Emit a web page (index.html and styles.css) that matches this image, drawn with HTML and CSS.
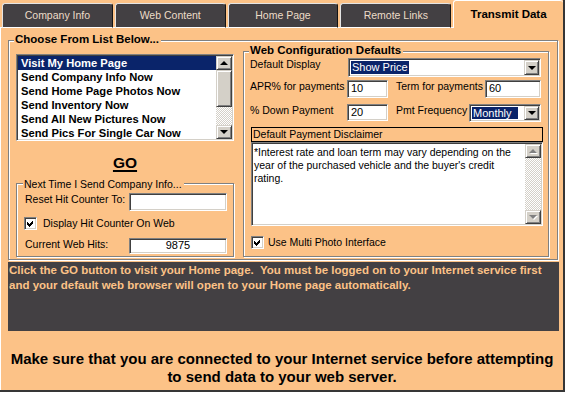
FILE: index.html
```html
<!DOCTYPE html>
<html lang="en">
<head>
    <meta charset="UTF-8">
    <meta name="viewport" content="width=device-width, initial-scale=1.0">
    <title>Transmit Data</title>
    <link rel="stylesheet" href="styles.css">
</head>
<body>
<div class="window">
    <div class="tabs">
        <div class="tab">Company Info</div>
        <div class="tab">Web Content</div>
        <div class="tab">Home Page</div>
        <div class="tab">Remote Links</div>
        <div class="tab active">Transmit Data</div>
    </div>

    <div class="panel">
        <div class="group outer">
            <div class="caption bold">Choose From List Below...</div>
            <div class="columns">
                <div class="left-col">
                    <div class="listbox">
                        <ul class="items">
                            <li class="selected">Visit My Home Page</li>
                            <li>Send Company Info Now</li>
                            <li>Send Home Page Photos Now</li>
                            <li>Send Inventory Now</li>
                            <li>Send All New Pictures Now</li>
                            <li>Send Pics For Single Car Now</li>
                        </ul>
                        <div class="vscroll">
                            <div class="sbtn up"></div>
                            <div class="thumb"></div>
                            <div class="track"></div>
                            <div class="sbtn down"></div>
                        </div>
                    </div>

                    <div class="go">GO</div>

                    <div class="group next">
                        <div class="caption">Next Time I Send Company Info...</div>
                        <div class="row reset-row">
                            <span class="lbl hit-lbl">Reset Hit Counter To:</span>
                            <div class="field hit-field"></div>
                        </div>
                        <div class="row check-row">
                            <span class="check">
                                <svg width="13" height="13" viewBox="0 0 13 13"><polygon points="3,5 5,7 9,3 9,6 5,10 3,8" fill="#000" shape-rendering="crispEdges"/></svg>
                            </span>
                            <span class="check-lbl">Display Hit Counter On Web</span>
                        </div>
                        <div class="row hits-row">
                            <span class="lbl hit-lbl">Current Web Hits:</span>
                            <div class="field hit-field hits">9875</div>
                        </div>
                    </div>
                </div>

                <div class="group config">
                    <div class="caption bold">Web Configuration Defaults</div>
                    <div class="row row-display">
                        <span class="lbl w98">Default Display</span>
                        <div class="combo w193">
                            <span class="pick">Show Price</span>
                            <span class="cbtn"></span>
                        </div>
                    </div>
                    <div class="row row-apr">
                        <span class="lbl w97">APR% for payments</span>
                        <div class="field small">10</div>
                        <span class="lbl second w89">Term for payments</span>
                        <div class="field term">60</div>
                    </div>
                    <div class="row row-down">
                        <span class="lbl w97">% Down Payment</span>
                        <div class="field small">20</div>
                        <span class="lbl second w73">Pmt Frequency</span>
                        <div class="combo w72">
                            <span class="pick monthly">Monthly</span>
                            <span class="cbtn"></span>
                        </div>
                    </div>
                    <div class="disclaimer-lbl">Default Payment Disclaimer</div>
                    <div class="memo">
                        <div class="memo-text">*Interest rate and loan term may vary depending on the<br>year of the purchased vehicle and the buyer's credit<br>rating.</div>
                        <div class="vscroll">
                            <div class="sbtn up off"></div>
                            <div class="track"></div>
                            <div class="sbtn down off"></div>
                        </div>
                    </div>
                    <div class="row multi-row">
                        <span class="check">
                            <svg width="13" height="13" viewBox="0 0 13 13"><polygon points="3,5 5,7 9,3 9,6 5,10 3,8" fill="#000" shape-rendering="crispEdges"/></svg>
                        </span>
                        <span class="check-lbl">Use Multi Photo Interface</span>
                    </div>
                </div>
            </div>
        </div>

        <div class="notice">Click the GO button to visit your Home page.&nbsp; You must be logged on to your Internet service first<br>and your default web browser will open to your Home page automatically.</div>

        <div class="warning">Make sure that you are connected to your Internet service before attempting<br>to send data to your web server.</div>
    </div>
</div>
</body>
</html>
```

FILE: styles.css
```css
body { margin: 0; background: #fff; font-family: "Liberation Sans", Arial, sans-serif; }

.window { width: 565px; height: 392px; box-sizing: border-box; background: #fcc287; border-right: 2px solid #363636; border-bottom: 2px solid #363636; display: flex; flex-direction: column; font-size: 10.5px; color: #000; }

/* tab strip */
.tabs { flex: none; display: flex; gap: 2px; height: 28px; padding-left: 2px; background: linear-gradient(#fff, #fff) left bottom / 100% 1px no-repeat; }
.tab { flex: 1; box-sizing: border-box; height: 25px; margin-top: 3px; background: #434043; color: #ecdcc8; border: 1px solid #e4e4e4; border-right-color: #141414; border-bottom-color: #fff; border-radius: 3px 3px 0 0; text-align: center; line-height: 23px; }
.tab.active { height: 28px; margin-top: 0; background: #fcc287; color: #000; border-color: #fff; border-right: none; border-bottom: none; font-weight: bold; font-size: 11.5px; line-height: 27px; }

.panel { flex: 1; border-left: 1px solid #fff; }

/* etched group boxes */
.group { box-sizing: border-box; border: 1px solid #808080; box-shadow: inset 1px 1px 0 #fff, 1px 1px 0 #fff; }
.caption { display: table; height: 14px; line-height: 14px; margin-top: -9px; padding: 0 2px 0 1px; background: #fcc287; white-space: nowrap; }
.bold { font-weight: bold; font-size: 11.5px; }

.outer { width: 550px; margin: 12px 0 0 7px; padding: 0 7px 2px; }
.outer > .caption { margin-left: -2px; }
.columns { display: flex; gap: 9px; align-items: flex-start; }

.left-col { width: 218px; margin-top: 8px; }

/* list box */
.listbox { display: flex; height: 87px; box-sizing: border-box; background: #fff; border: 1px solid; border-color: #808080 #fff #fff #808080; box-shadow: inset 1px 1px 0 #404040, inset -1px -1px 0 #d4d0c8; padding: 1px; }
.items { flex: 1; margin: 0; padding: 0; list-style: none; overflow: hidden; }
.items li { height: 14px; line-height: 14px; padding-left: 3px; font-weight: bold; font-size: 11.2px; white-space: nowrap; }
.items li.selected { background: #0a246a; color: #fff; }

.vscroll { width: 16px; display: flex; flex-direction: column; }
.sbtn, .thumb, .cbtn { box-sizing: border-box; background: #d4d0c8; border: 1px solid; border-color: #d4d0c8 #404040 #404040 #d4d0c8; box-shadow: inset 1px 1px 0 #fff, inset -1px -1px 0 #808080; }
.sbtn { height: 14px; display: flex; align-items: center; justify-content: center; }
.sbtn::after, .cbtn::after { content: ""; width: 0; height: 0; border-left: 4px solid transparent; border-right: 4px solid transparent; }
.sbtn.up::after { border-bottom: 4px solid #000; }
.sbtn.down::after, .cbtn::after { border-top: 4px solid #000; }
.sbtn.off::after { filter: drop-shadow(1px 1px 0 #fff); }
.sbtn.up.off::after { border-bottom-color: #808080; }
.sbtn.down.off::after { border-top-color: #808080; }
.thumb { height: 37px; }
.track { flex: 1; background: repeating-conic-gradient(#fff 0 25%, #d4d0c8 0 50%) 0 0 / 2px 2px; }

.go { margin-top: 12px; text-align: center; font-weight: bold; font-size: 15.5px; line-height: 20px; text-decoration: underline; text-decoration-thickness: 2px; text-underline-offset: 2px; }

/* rows and fields */
.row { display: flex; align-items: flex-start; }
.lbl { line-height: 12px; white-space: nowrap; flex: none; }
.field { box-sizing: border-box; flex: none; background: #fff; border: 1px solid; border-color: #808080 #fff #fff #808080; box-shadow: inset 1px 1px 0 #404040, inset -1px -1px 0 #d4d0c8; padding: 0 3px; line-height: 15px; font-size: 11px; }

.next { height: 74px; margin-top: 10px; padding: 0 6px 0 8px; }
.next > .caption { margin: -7px 0 0 -2px; }
.hit-lbl { width: 104px; }
.hit-field { width: 98px; }
.reset-row { margin-top: 2px; }
.reset-row .hit-field { height: 18px; }
.check-row { margin-top: 5px; height: 14px; align-items: center; }
.check-row .check { margin-left: -1px; }
.hits-row { margin-top: 8px; }
.hits-row .hit-field { height: 16px; line-height: 13px; }
.hits { text-align: center; }

.check { flex: none; width: 13px; height: 13px; box-sizing: border-box; background: #fff; border: 1px solid; border-color: #808080 #fff #fff #808080; box-shadow: inset 1px 1px 0 #404040, inset -1px -1px 0 #d4d0c8; display: flex; align-items: center; justify-content: center; }
.check svg { flex: none; }
.check-lbl { margin-left: 6px; line-height: 13px; white-space: nowrap; }

.config { width: 306px; height: 206px; margin-top: 5px; padding: 0 7px 0 6px; }
.config > .caption { margin-left: -1px; }
.w98 { width: 98px; }
.w97 { width: 97px; }
.w89 { width: 89px; }
.w73 { width: 73px; }
.second { margin-left: 8px; }
.small { width: 41px; height: 18px; }
.term { width: 56px; height: 18px; }
.row-down .small { height: 17px; }

.combo { box-sizing: border-box; flex: none; display: flex; align-items: stretch; background: #fff; border: 1px solid; border-color: #808080 #fff #fff #808080; box-shadow: inset 1px 1px 0 #404040, inset -1px -1px 0 #d4d0c8; padding: 1px; }
.w193 { width: 193px; height: 19px; }
.w72 { width: 72px; height: 18px; }
.pick { margin: 1px auto 1px 1px; padding: 0 1px; background: #0a246a; color: #fff; font-size: 11px; line-height: 13px; white-space: nowrap; }
.pick.monthly { width: 44px; padding: 0 1px; }
.cbtn { width: 15px; display: flex; align-items: center; justify-content: center; }

.row-display { margin-top: 1px; }
.row-apr { margin-top: 3px; }
.row-down { margin-top: 6px; }

.disclaimer-lbl { width: 292px; height: 15px; box-sizing: border-box; margin: 5px 0 0 1px; border: 1px solid #000; padding-left: 1px; line-height: 13px; }
.memo { display: flex; width: 292px; height: 84px; box-sizing: border-box; margin-left: 1px; background: #fff; border: 1px solid; border-color: #808080 #fff #fff #808080; box-shadow: inset 1px 1px 0 #404040, inset -1px -1px 0 #d4d0c8; padding: 1px; }
.memo-text { flex: 1; padding: 2px 0 0 1px; line-height: 13px; white-space: nowrap; }
.multi-row { margin: 10px 0 0 1px; align-items: center; height: 13px; }
.multi-row .check-lbl { margin-left: 4px; }

/* help text */
.notice { width: 551px; height: 69px; box-sizing: border-box; margin: 2px 0 0 7px; padding: 1px 0 0 1px; background: #434043; color: #fcc287; font-weight: bold; font-size: 11.5px; line-height: 15px; white-space: nowrap; }
.warning { margin-top: 19px; text-align: center; font-weight: bold; font-size: 15px; line-height: 18px; white-space: nowrap; }
```
